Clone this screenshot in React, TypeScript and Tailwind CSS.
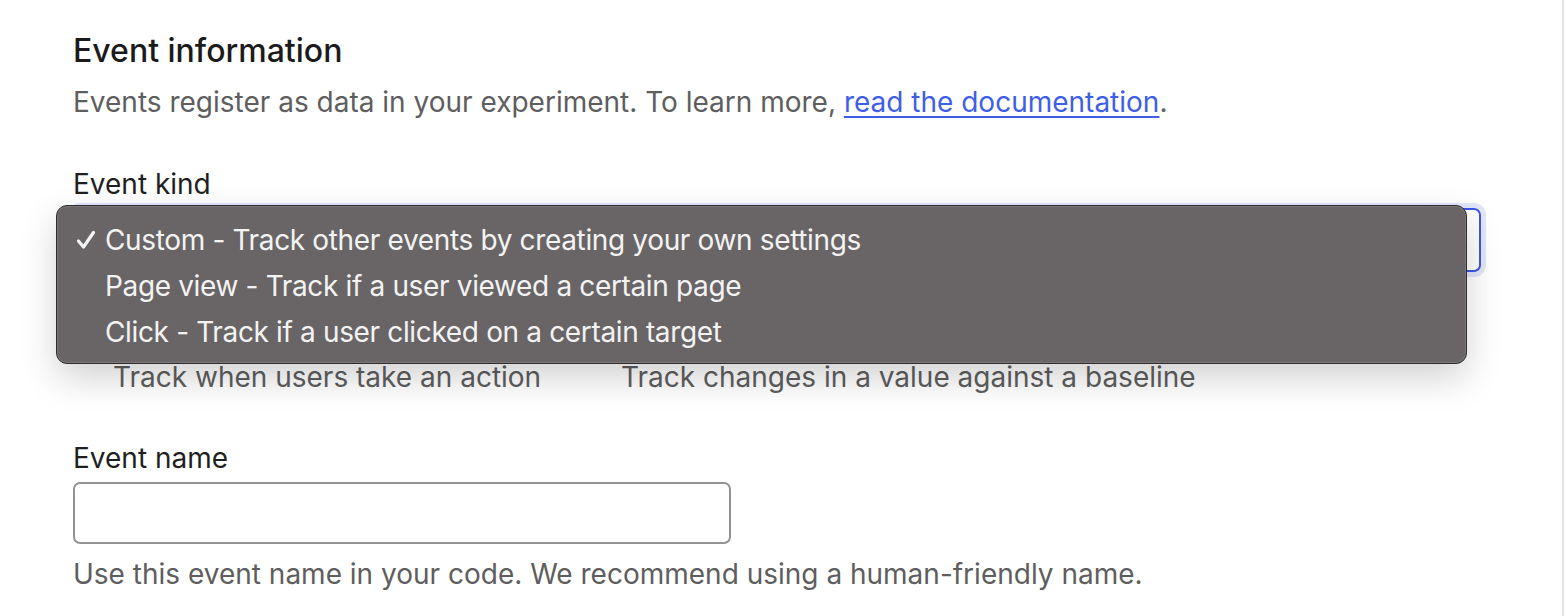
import React from "react";

const options = [
  { label: "Custom - Track other events by creating your own settings", checked: true },
  { label: "Page view - Track if a user viewed a certain page", checked: false },
  { label: "Click - Track if a user clicked on a certain target", checked: false },
];

function Check() {
  return (
    <svg width="20" height="20" viewBox="0 0 20 20" fill="none">
      <path
        d="M2.5 11 L7.5 17 L17.5 2.5"
        stroke="#f4f4f4"
        strokeWidth="3.2"
        strokeLinecap="round"
        strokeLinejoin="round"
      />
    </svg>
  );
}

export default function App() {
  return (
    <div
      className="relative flex h-[616px] w-full overflow-hidden bg-white"
      style={{ fontFamily: "Inter, 'Noto Sans', sans-serif" }}
    >
      <div className="flex-1 pl-[73px]">
        <h2 className="mt-[31px] text-[32px] font-medium leading-[40px] text-[#1b1b1b]">
          Event information
        </h2>
        <p className="mt-[13px] text-[28px] leading-[36px] text-[#5e5e5e]">
          Events register as data in your experiment. To learn more,{" "}
          <a href="#" className="text-[#3f5ee8] underline decoration-2 underline-offset-[4px]">
            read the documentation
          </a>
          .
        </p>

        <div className="mt-[46px] text-[28px] leading-[36px] text-[#1f1f1f]">Event kind</div>
        <div className="mt-[6px] h-[64px] w-[1408px] rounded-[7px] border-2 border-[#3b57e6] bg-white shadow-[0_0_0_5px_#e3e6fa]" />

        <div className="mt-[87px] flex text-[28px] leading-[36px] text-[#5e5e5e]">
          <div className="w-[508px] pl-[40px]">Track when users take an action</div>
          <div className="pl-[40px]">Track changes in a value against a baseline</div>
        </div>

        <div className="mt-[45px] text-[28px] leading-[36px] text-[#1f1f1f]">Event name</div>
        <input
          type="text"
          className="mt-[6px] block h-[62px] w-[658px] rounded-[7px] border-2 border-[#939393] bg-white px-3 text-[28px] outline-none"
        />
        <p className="mt-[12px] text-[28px] leading-[36px] text-[#5e5e5e]">
          Use this event name in your code. We recommend using a human-friendly name.
        </p>
      </div>
      <div className="w-[4px] border-l-2 border-[#e4e4e4]" />

      {/* native select menu */}
      <div className="absolute left-[56px] top-[205px] h-[159px] w-[1411px] rounded-[11px] border border-[#2e2c2d] bg-[#696566] pt-[11px] shadow-[0_14px_36px_rgba(0,0,0,0.18),inset_0_0_0_1px_rgba(255,255,255,0.12)]">
        {options.map((o) => (
          <div
            key={o.label}
            className="flex h-[46px] items-center text-[28px] tracking-[-0.35px] text-[#f3f3f3]"
          >
            <span className="flex w-[48px] justify-end pr-[9px]">{o.checked && <Check />}</span>
            <span>{o.label}</span>
          </div>
        ))}
      </div>
    </div>
  );
}
